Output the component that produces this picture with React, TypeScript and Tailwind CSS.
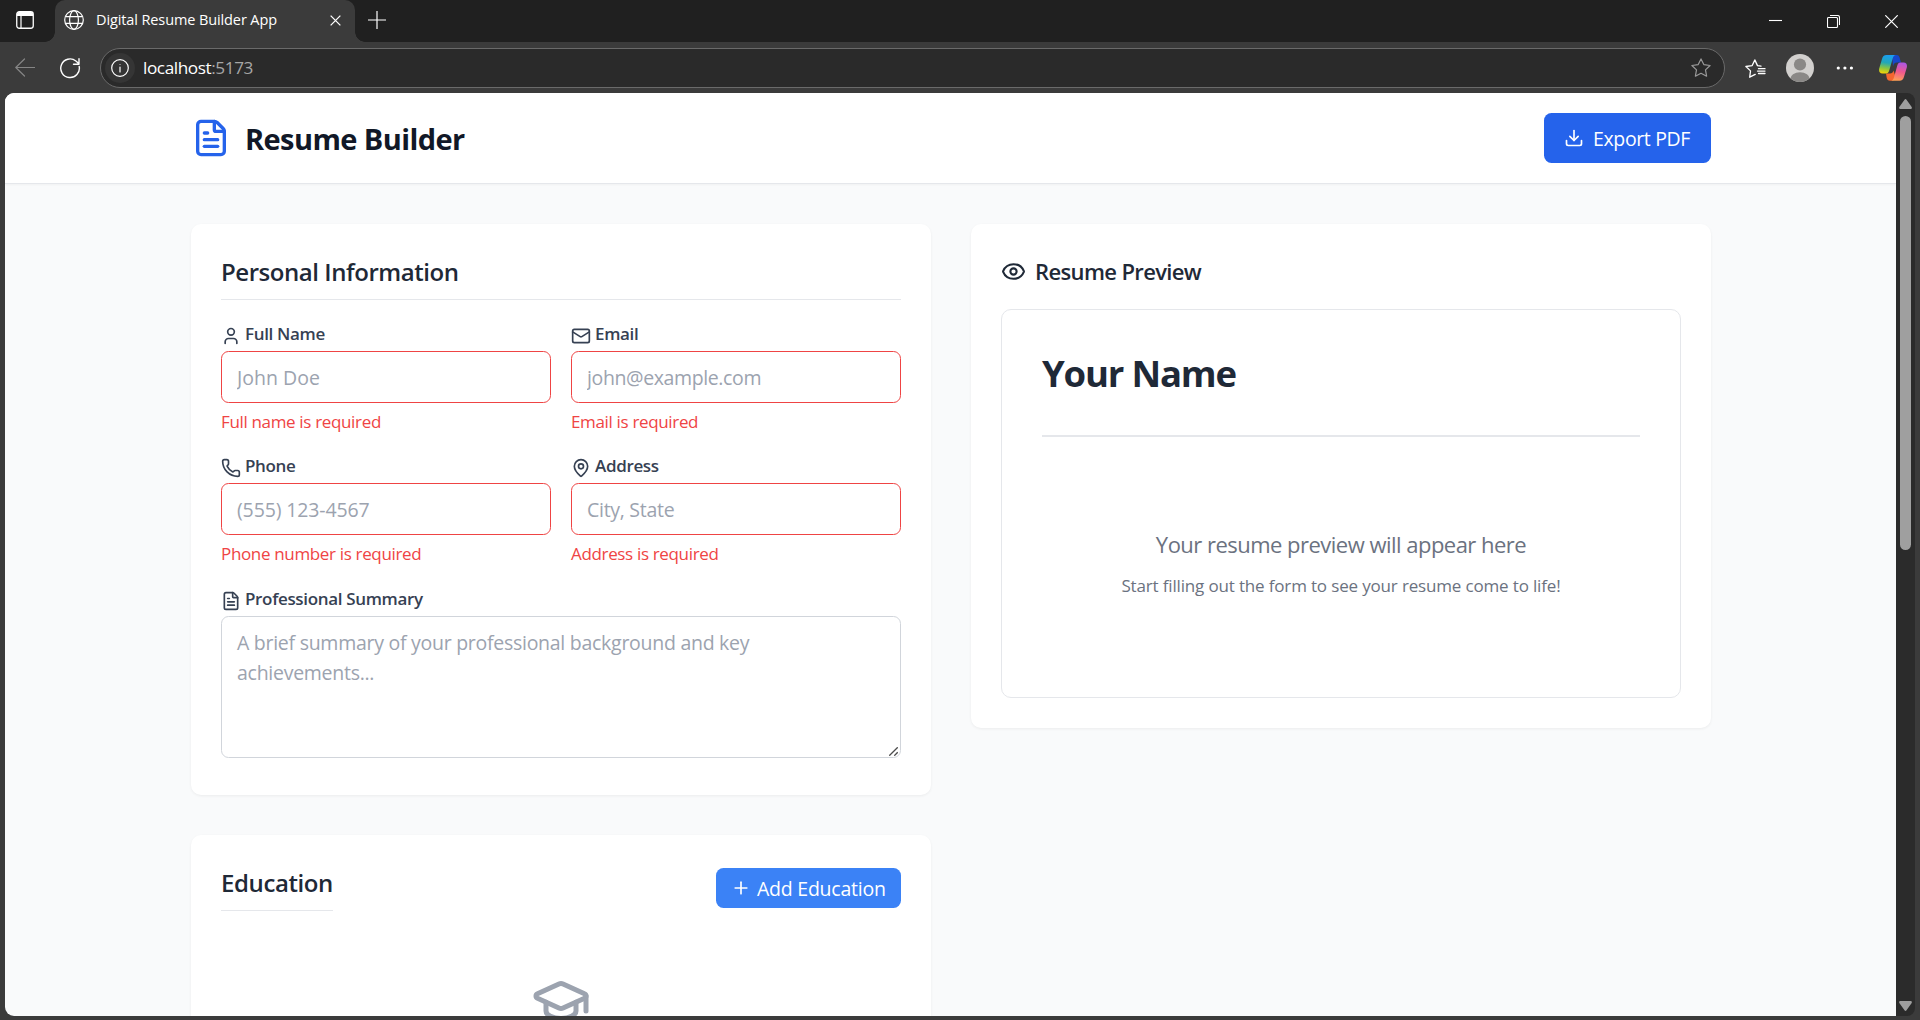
import type { ReactNode } from "react";
import { Download, Eye, FileText, GraduationCap, Mail, MapPin, Phone, Plus, User } from "lucide-react";

function TabStrip() {
  return (
    <div className="flex h-[42px] bg-[#202020] text-white">
      <div className="flex w-[55px] items-center justify-center rounded-br-[10px] pr-[5px] pb-[2px]">
        <svg width="18" height="18" viewBox="0 0 18 18" fill="none">
          <rect x="0.75" y="0.75" width="16.5" height="16.5" rx="2.5" stroke="#fff" strokeWidth="1.3" />
          <path d="M1 5V3a2 2 0 0 1 2-2h12a2 2 0 0 1 2 2v2z" fill="#fff" />
          <path d="M5 5v12" stroke="#fff" strokeWidth="1.2" />
        </svg>
      </div>
      <div className="relative flex w-[300px] items-center rounded-t-[10px] bg-[#3b3b3b] pr-[14px] pl-[9px]">
        <span className="absolute bottom-0 -left-[10px] size-[10px] bg-[radial-gradient(circle_at_0_0,transparent_9.5px,#3b3b3b_10px)]" />
        <span className="absolute -right-[10px] bottom-0 size-[10px] bg-[radial-gradient(circle_at_100%_0,transparent_9.5px,#3b3b3b_10px)]" />
        <svg className="-mt-[2px] shrink-0" width="20" height="20" viewBox="0 0 20 20" fill="none" stroke="#fff" strokeWidth="1.2">
          <circle cx="10" cy="10" r="9.3" />
          <ellipse cx="10" cy="10" rx="4.4" ry="9.3" />
          <path d="M1.5 6.6h17M1.5 13.4h17" />
        </svg>
        <span className="-mt-[2px] ml-[12px] text-[14.5px] tracking-[-0.11px]">Digital Resume Builder App</span>
        <svg className="-mt-[1px] ml-auto" width="11" height="11" viewBox="0 0 12 12" fill="none" stroke="#fff" strokeWidth="1.4">
          <path d="M.7.7l10.6 10.6M11.3.7L.7 11.3" />
        </svg>
      </div>
      <svg className="mt-[11px] ml-[13px]" width="18" height="18" viewBox="0 0 18 18" fill="none" stroke="#fff" strokeWidth="1.2">
        <path d="M9 0v18M0 9h18" />
      </svg>
      <div className="mt-[15px] mr-[22px] ml-auto flex gap-[45px]">
        <svg width="13" height="13" viewBox="0 0 13 13"><path d="M0 5.5h13" stroke="#fff" strokeWidth="1.1" /></svg>
        <svg width="13" height="13" viewBox="0 0 13 13" fill="none" stroke="#fff" strokeWidth="1.1">
          <rect x=".5" y="2.5" width="10" height="10" rx="1" />
          <path d="M3 .5h7.5a2 2 0 0 1 2 2V10" />
        </svg>
        <svg width="13" height="13" viewBox="0 0 13 13" fill="none" stroke="#fff" strokeWidth="1.2">
          <path d="M.3.3l12.4 12.4M12.7.3L.3 12.7" />
        </svg>
      </div>
    </div>
  );
}

function CopilotLogo() {
  return (
    <svg width="28" height="26" viewBox="0 0 28 26" fill="none">
      <defs>
        <linearGradient id="cool" x1="8" y1="0" x2="5" y2="19" gradientUnits="userSpaceOnUse">
          <stop offset="0" stopColor="#1b9df0" />
          <stop offset=".4" stopColor="#22a7b8" />
          <stop offset=".7" stopColor="#8cc63f" />
          <stop offset="1" stopColor="#ffd400" />
        </linearGradient>
        <linearGradient id="warm" x1="22" y1="7" x2="18" y2="26" gradientUnits="userSpaceOnUse">
          <stop offset="0" stopColor="#a856e8" />
          <stop offset=".5" stopColor="#f0588e" />
          <stop offset="1" stopColor="#ffa354" />
        </linearGradient>
      </defs>
      <path d="M13 0h4.500c2 0 2.700 1.300 3.200 3l1.300 4.500h-4c-2.500 0-3.300 1.500-4 4z" fill="#1747c9" />
      <path d="M7 18.500h4c2 0 3-1 3.500-3l2 6c-.6 2.500-1.500 4.300-4 4.300H11c-2 0-2.800-1.300-3.300-3z" fill="#f4662f" />
      <path d="M7.500 0H17c-1.800 0-2.700 1.500-3.300 3.500l-3.500 12c-.6 2-1.400 3-3.200 3H3.500C.8 18.500-.4 16.500.2 13.500L3 4C3.700 1.500 5 0 7.500 0z" fill="url(#cool)" />
      <path d="M20.500 25.800H11.800c1.800 0 2.600-1.500 3.200-3.500L18.300 10.500c.6-2 1.400-3 3.200-3h3.200c2.700 0 3.700 2 3.100 5L25 21.800c-.7 2.500-2 4-4.500 4z" fill="url(#warm)" />
    </svg>
  );
}

function Toolbar() {
  return (
    <div className="flex h-[51px] items-start bg-[#3b3b3b] pt-[6px] pl-[15px]">
      <svg className="mt-[10px]" width="20" height="20" viewBox="0 0 20 20" fill="none" stroke="#858585" strokeWidth="1.2" strokeLinecap="round" strokeLinejoin="round">
        <path d="M19.500 9.500H.8M9.500 1L.8 9.500 9.500 18" />
      </svg>
      <svg className="mt-[10px] ml-[25px]" width="21" height="21" viewBox="0 0 21 21" fill="none" stroke="#fff" strokeWidth="1.400" strokeLinecap="round" strokeLinejoin="round">
        <path d="M19.200 8.500A9.300 9.300 0 1 1 15.900 3L19 5.800M19 .8v5.400h-5.500" />
      </svg>
      <div className="ml-[19px] flex h-10 w-[1625px] items-center rounded-full border border-[#6a6a6a] bg-[#2a2a2a] pr-[13px] pl-[4px]">
        <span className="flex size-[30px] items-center justify-center rounded-full bg-[#353535]">
          <svg width="18" height="18" viewBox="0 0 18 18" fill="none" stroke="#fff" strokeWidth="1.2">
            <circle cx="9" cy="9" r="8.300" />
            <path d="M9 8v5" strokeLinecap="round" />
            <circle cx="9" cy="5.400" r=".5" fill="#fff" stroke="none" />
          </svg>
        </span>
        <span className="-mt-[1px] ml-[8px] text-[17.2px] tracking-[-0.42px] text-white">
          localhost<span className="text-[#a6a6a6]">:5173</span>
        </span>
        <svg className="ml-auto" width="20" height="20" viewBox="0 0 20 20" fill="none" stroke="#9a9a9a" strokeWidth="1.200" strokeLinejoin="round">
          <path d="M10 .9l2.800 5.700 6.300.9-4.600 4.400 1.100 6.300L10 15.300l-5.600 2.900 1.100-6.300L.9 7.500l6.300-.9z" />
        </svg>
      </div>
      <svg className="mt-[11px] ml-[20px]" width="21" height="20" viewBox="0 0 21 20" fill="none" stroke="#fff" strokeWidth="1.300" strokeLinejoin="round" strokeLinecap="round">
        <path d="M10.200 15.400L4.700 18.200l.8-6.300L.9 7.500l6.300-.9L9.800.9l2.700 5.700 3.500.5M13.500 9.700h6.500M12.500 12.100h7.500M13.500 14.500h6.500" />
      </svg>
      <svg className="mt-[6px] ml-[20px]" width="28" height="28" viewBox="0 0 28 28">
        <defs><clipPath id="avatar"><circle cx="14" cy="14" r="14" /></clipPath></defs>
        <g clipPath="url(#avatar)">
          <rect width="28" height="28" fill="#d2d0ce" />
          <circle cx="14" cy="10.500" r="6.100" fill="#8a8886" />
          <ellipse cx="14" cy="25" rx="9.800" ry="6.800" fill="#8a8886" />
        </g>
      </svg>
      <svg className="mt-[18px] ml-[22px]" width="18" height="4" viewBox="0 0 18 4" fill="#fff">
        <circle cx="2.300" cy="2" r="1.600" /><circle cx="8.900" cy="2" r="1.600" /><circle cx="15.400" cy="2" r="1.600" />
      </svg>
      <div className="mt-[7px] ml-[25px]"><CopilotLogo /></div>
    </div>
  );
}

function Scrollbar() {
  return (
    <div className="flex w-[19px] flex-col items-center rounded-r-[8px] bg-[#2b2b2b] pt-[6px] pb-[5px]">
      <svg width="13" height="10" viewBox="0 0 13 10"><path d="M5.500.8a1.200 1.200 0 0 1 2 0L12.700 8q.6 2-1 2H1.300Q-.3 10 .3 8z" fill="#9f9f9f" /></svg>
      <div className="mt-[7px] h-[434px] w-[11px] rounded-full bg-[#9f9f9f]" />
      <svg className="mt-auto" width="13" height="10" viewBox="0 0 13 10"><path d="M5.500 9.200a1.200 1.200 0 0 0 2 0L12.700 2q.6-2-1-2H1.300Q-.3 0 .3 2z" fill="#9f9f9f" /></svg>
    </div>
  );
}

function Label({ icon, children }: { icon: ReactNode; children: ReactNode }) {
  return (
    <div className="flex h-[30px] items-start gap-[4px] text-[17px] leading-[26px] font-[550] tracking-[-0.34px] text-gray-700">
      <span className="mt-[5px]">{icon}</span>
      <span>{children}</span>
    </div>
  );
}

function Field({ icon, label, placeholder, error, spacing }: { icon: ReactNode; label: string; placeholder: string; error: string; spacing: string }) {
  return (
    <div>
      <Label icon={icon}>{label}</Label>
      <input
        placeholder={placeholder}
        className={"block h-[52px] w-full rounded-[7.5px] border border-[#ef4444] px-[15px] pt-[1px] text-[19.5px] placeholder:text-[#9ca3af] " + spacing}
      />
      <p className="mt-[6px] text-[17px] leading-[26px] tracking-[-0.34px] text-[#ef4444]">{error}</p>
    </div>
  );
}

const card = "rounded-[10px] bg-white p-[30px] shadow-[0_1px_3px_0_rgba(0,0,0,0.06)]";
const heading = "border-b border-[#e5e7eb] pt-[1px] pb-[10px] text-[24px] leading-[34px] font-[550] text-[#1f2937]";

export default function App() {
  return (
    <div className="flex h-[1020px] w-[1920px] flex-col overflow-hidden bg-[#3b3b3b] font-['Open_Sans',sans-serif]">
      <TabStrip />
      <Toolbar />
      <div className="ml-[5px] flex h-[923px] w-[1910px]">
        <div className="flex w-[1891px] flex-col overflow-hidden rounded-l-[9px] bg-[#f9fafb]">
          <header className="flex h-[91px] shrink-0 items-center border-b border-[#e5e7eb] bg-white pr-[185px] pl-[186px] shadow-[0_1px_2px_rgba(0,0,0,0.04)]">
            <FileText size={40} className="text-[#2563eb]" />
            <h1 className="mt-[2px] ml-[14px] text-[29px] leading-[40px] font-bold tracking-[-0.58px] text-[#111827]">Resume Builder</h1>
            <button className="ml-auto flex h-[50px] w-[167px] items-center gap-[9px] rounded-[7.5px] bg-[#2563eb] pl-[20px] text-[19.5px] tracking-[-0.36px] text-white">
              <Download size={20} />
              <span className="mt-[2px]">Export PDF</span>
            </button>
          </header>

          <main className="grid grid-cols-[740px_740px] items-start gap-[40px] pt-[40px] pl-[186px]">
            <div className="flex flex-col gap-[40px]">
              <section className={card + " h-[571px]"}>
                <h2 className={heading + " tracking-[-0.45px]"}>Personal Information</h2>
                <div className="mt-[21px] grid grid-cols-2 gap-x-[20px] gap-y-[18px]">
                  <Field icon={<User size={20} />} label="Full Name" placeholder="John Doe" error="Full name is required" spacing="tracking-[0.03px]" />
                  <Field icon={<Mail size={20} />} label="Email" placeholder="john@example.com" error="Email is required" spacing="tracking-[-0.38px]" />
                  <Field icon={<Phone size={20} />} label="Phone" placeholder="(555) 123-4567" error="Phone number is required" spacing="tracking-[-0.13px]" />
                  <Field icon={<MapPin size={20} />} label="Address" placeholder="City, State" error="Address is required" spacing="tracking-[-0.28px]" />
                </div>
                <div className="relative mt-[19px]">
                  <Label icon={<FileText size={20} />}>Professional Summary</Label>
                  <textarea
                    placeholder="A brief summary of your professional background and key achievements..."
                    className="block h-[142px] w-full resize-none rounded-[7.5px] border border-[#d1d5db] px-[15px] py-[11px] text-[19.5px] leading-[30px] tracking-[-0.27px] placeholder:text-[#9ca3af]"
                  />
                  <svg className="absolute right-[3px] bottom-[2px]" width="9" height="9" viewBox="0 0 9 9" stroke="#4b4b4b" strokeWidth="1.3">
                    <path d="M.3 8.700L8.700.3M5.300 8.700l3.400-3.400" />
                  </svg>
                </div>
              </section>

              <section className={card + " h-[400px]"}>
                <div className="flex items-center justify-between">
                  <h2 className={heading + " tracking-[-0.4px]"}>Education</h2>
                  <button className="flex h-[40px] w-[185px] items-center gap-[6px] rounded-[7.5px] bg-[#3b82f6] pl-[15px] text-[19.5px] tracking-[-0.24px] text-white">
                    <Plus size={20} />
                    <span className="mt-[2px]">Add Education</span>
                  </button>
                </div>
                <GraduationCap size={60} className="mx-auto mt-[60px] text-[#9ca3af]" />
              </section>
            </div>

            <section className={card}>
              <h2 className="flex h-[35px] items-center gap-[9px] text-[22px] font-[550] tracking-[-0.63px] text-[#1f2937]">
                <Eye size={25} />
                <span>Resume Preview</span>
              </h2>
              <div className="mt-[20px] h-[389px] rounded-[10px] border border-[#e5e7eb] p-[40px]">
                <h1 className="border-b-2 border-[#e5e7eb] pt-[2px] pb-[40px] text-[36.5px] leading-[43px] font-bold tracking-[-1.2px] text-[#1f2937]">Your Name</h1>
                <div className="mt-[90px] text-center text-[#6b7280]">
                  <p className="text-[22px] leading-[35px] tracking-[-0.52px]">Your resume preview will appear here</p>
                  <p className="mt-[11px] text-[17px] leading-[25px] tracking-[-0.16px]">Start filling out the form to see your resume come to life!</p>
                </div>
              </div>
            </section>
          </main>
        </div>
        <Scrollbar />
      </div>
    </div>
  );
}
